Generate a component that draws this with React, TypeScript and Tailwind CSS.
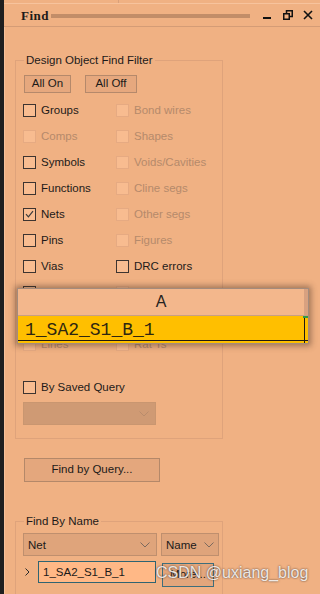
import React from 'react'

type Item = { label: string; on: boolean; checked?: boolean }

const left: Item[] = [
  { label: 'Groups', on: true },
  { label: 'Comps', on: false },
  { label: 'Symbols', on: true },
  { label: 'Functions', on: true },
  { label: 'Nets', on: true, checked: true },
  { label: 'Pins', on: true },
  { label: 'Vias', on: true },
  { label: 'Clines', on: true },
  { label: 'Fibers', on: false },
  { label: 'Lines', on: false },
]

const right: Item[] = [
  { label: 'Bond wires', on: false },
  { label: 'Shapes', on: false },
  { label: 'Voids/Cavities', on: false },
  { label: 'Cline segs', on: false },
  { label: 'Other segs', on: false },
  { label: 'Figures', on: false },
  { label: 'DRC errors', on: true },
  { label: 'Text', on: false },
  { label: 'Ratsnests', on: false },
  { label: 'Rat Ts', on: false },
]

const Chevron = ({ color = '#7d6a5e' }: { color?: string }) => (
  <svg width="10" height="6" viewBox="0 0 10 6">
    <path d="M0.5 0.5 L5 5 L9.5 0.5" fill="none" stroke={color} strokeWidth="1" />
  </svg>
)

const Check = ({ item }: { item: Item }) => (
  <div className="flex items-center gap-[5px] h-[26px]">
    <span
      className={
        item.on
          ? 'w-[13px] h-[13px] border border-[#3d3430] bg-[#f9bd91] flex items-center justify-center shrink-0'
          : 'w-[13px] h-[13px] border border-[#e6aa82] bg-[#f8bc90] flex items-center justify-center shrink-0'
      }
    >
      {item.checked && (
        <svg width="9" height="9" viewBox="0 0 9 9">
          <path d="M1 4.2 L3.4 6.8 L8 1.2" fill="none" stroke="#3a3a3a" strokeWidth="1.2" />
        </svg>
      )}
    </span>
    <span className={item.on ? 'text-[#1c1a19]' : 'text-[#b58a6b]'}>{item.label}</span>
  </div>
)

export default function App() {
  const rows: Item[] = []
  left.forEach((l, i) => {
    rows.push(l)
    rows.push(right[i])
  })

  return (
    <div className="relative w-[320px] h-[594px] overflow-hidden flex bg-[#f0b183] font-['Liberation_Sans',sans-serif] text-[11.5px] leading-[14px] text-[#1c1a19]">
      {/* dark strip at the left edge */}
      <div className="w-[4px] bg-[#1f1f1f] shrink-0" />

      <div className="flex-1 flex flex-col">
        {/* top strip */}
        <div className="h-[4px] shrink-0 flex border-b border-[#f7c39d]">
          <div className="w-[115px] border-r border-[#d9a07a]" />
        </div>

        {/* title bar */}
        <div className="h-[23px] shrink-0 flex items-center pl-[17px] border-b border-[#d49c76]">
          <span className="w-[29px] font-['Liberation_Serif',serif] font-bold text-[13px] leading-none tracking-[0.5px] text-[#1d1b1a]">Find</span>
          <div className="ml-[1px] w-[199px] h-[4px] bg-[#c28d68] mt-[1px]" />
          <div className="ml-[13px] w-[8px] h-[2px] bg-[#111] mt-[6px]" />
          <svg className="ml-[12px]" width="10" height="10" viewBox="0 0 10 10">
            <rect x="0.75" y="3.75" width="5.5" height="5.5" fill="none" stroke="#111" strokeWidth="1.5" />
            <path d="M3.5 3.5 V0.75 H9.25 V6.5 H6.5" fill="none" stroke="#111" strokeWidth="1.5" />
          </svg>
          <svg className="ml-[10px]" width="10" height="10" viewBox="0 0 10 10">
            <path d="M1 1 L9 9 M9 1 L1 9" stroke="#111" strokeWidth="1.6" />
          </svg>
        </div>

        {/* content */}
        <div className="shrink-0 pl-[10px] flex flex-col border-l border-[#f6c19b]">
          <fieldset className="mt-[26px] w-[208px] border border-[#dfa37b] pb-[13px]">
            <legend className="ml-[8px] px-[2px] leading-[14px]">Design Object Find Filter</legend>

            <div className="mt-[8px] pl-[8px] flex gap-[14px]">
              <button className="w-[47px] h-[18px] bg-[#e6a87e] border border-[#b5896b] leading-none">All On</button>
              <button className="w-[52px] h-[18px] bg-[#e6a87e] border border-[#b5896b] leading-none">All Off</button>
            </div>

            <div className="mt-[4px] pl-[7px] grid grid-cols-[93px_1fr]">
              {rows.map((r, i) => (
                <Check key={i} item={r} />
              ))}
            </div>

            <div className="mt-[17px] pl-[7px]">
              <Check item={{ label: 'By Saved Query', on: true }} />
            </div>
            <div className="mt-[2px] ml-[7px] w-[133px] h-[23px] bg-[#cf9a74] border border-[#c99670] flex items-center justify-end pr-[6px]">
              <Chevron color="#b98c6c" />
            </div>
          </fieldset>

          <button className="mt-[19px] ml-[9px] w-[136px] h-[24px] bg-[#e4a77d] border border-[#b48869] leading-none">
            Find by Query...
          </button>

          <fieldset className="mt-[32px] w-[208px] h-[120px] border border-[#dfa37b]">
            <legend className="ml-[8px] px-[2px] leading-[14px]">Find By Name</legend>
            <div className="mt-[5px] pl-[7px] flex gap-[4px]">
              <div className="w-[134px] h-[23px] bg-[#dfa47b] border border-[#bf8f6e] flex items-center justify-between pl-[4px] pr-[6px]">
                <span>Net</span>
                <Chevron />
              </div>
              <div className="w-[58px] h-[23px] bg-[#dfa47b] border border-[#bf8f6e] flex items-center justify-between pl-[4px] pr-[4px]">
                <span>Name</span>
                <Chevron />
              </div>
            </div>
            <div className="mt-[5px] pl-[7px] flex items-start">
              <div className="w-[15px] h-[22px] flex items-center pl-[2px]">
                <svg width="5" height="8" viewBox="0 0 5 8">
                  <path d="M0.5 0.5 L4 4 L0.5 7.5" fill="none" stroke="#2b2b2b" strokeWidth="1" />
                </svg>
              </div>
              <div className="w-[118px] h-[22px] bg-[#ffb886] border border-[#2f6472] flex items-center pl-[4px]">
                1_SA2_S1_B_1
              </div>
              <button className="ml-[6px] mt-[2px] w-[52px] h-[24px] bg-[#e3a67c] border border-[#3e6e7c] leading-none">
                More...
              </button>
            </div>
          </fieldset>
        </div>
      </div>

      {/* overlay popup */}
      <div className="absolute left-[17px] top-[288px] w-[292px] border border-[#a48b7c] shadow-[0_0_6px_2px_rgba(60,40,30,0.45)]">
        <div className="h-[27px] bg-[#f3b78c] border-b border-[#c79f84] flex">
          <div className="flex-1 flex items-center justify-center text-[16px] text-[#262321]">A</div>
          <div className="w-[4px] bg-[#d8a180]" />
        </div>
        <div className="relative h-[27px] bg-[#ffbf00] flex items-center pl-[7px] font-['Liberation_Mono',monospace] text-[18px] text-[#2e2610]">
          1_SA2_S1_B_1
          <div className="absolute left-0 right-0 bottom-[2px] h-[1px] bg-[#1f1a12]" />
          <div className="absolute right-[3px] top-0 bottom-0 w-[1.5px] bg-[#1f1a12]" />
          <div className="absolute right-0 top-0 w-[5px] h-[2px] bg-[#2f9a47]" />
        </div>
      </div>

      {/* watermark */}
      <div className="absolute left-[156px] top-[564px] text-[16px] leading-[18px] text-white/85 [text-shadow:0_0_2px_rgba(40,30,30,0.9)]">
        CSDN @uxiang_blog
      </div>
    </div>
  )
}
